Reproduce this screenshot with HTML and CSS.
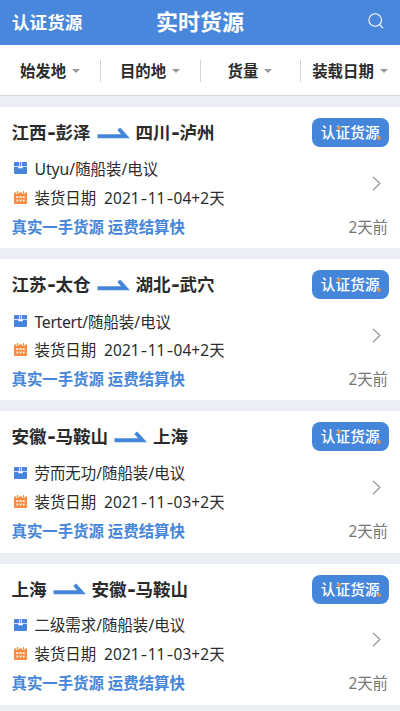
FILE: index.html
```
<!DOCTYPE html>
<html lang="zh-CN">
<head>
<meta charset="utf-8">
<title>实时货源</title>
<link rel="stylesheet" href="styles.css">
</head>
<body>
<svg class="defs" width="0" height="0" aria-hidden="true">
  <symbol id="arrow" viewBox="0 0 32 12"><path d="M0 7.2H23.5L19.8 3L22.6 .6L32.5 11.2H0Z" fill="#4586da"/></symbol>
  <symbol id="box" viewBox="0 0 13 12"><path d="M.8 0H5V4.2H0V1Q0 0 .8 0ZM8 0H12.2Q13 0 13 1V4.2H8ZM5.8 0H7.2V4.2H5.8ZM0 5H4.2V6.2H8.8V5H13V11Q13 12 12 12H1Q0 12 0 11Z" fill="#4586da"/></symbol>
  <symbol id="calendar" viewBox="0 0 13 13"><path d="M1 1.5H12Q13 1.5 13 2.5V12Q13 13 12 13H1Q0 13 0 12V2.5Q0 1.5 1 1.5Z" fill="#fa8b3c"/><path d="M3.5 0V3M9.5 0V3" stroke="#fff" stroke-width="2.4"/><path d="M3.5 0V2.7M9.5 0V2.7" stroke="#fa8b3c" stroke-width="1.2"/><path d="M2.3 5H4.3V7H2.3ZM5.5 5H7.5V7H5.5ZM8.7 5H10.7V7H8.7ZM2.3 8.6H4.3V10.6H2.3ZM5.5 8.6H7.5V10.6H5.5ZM8.7 8.6H10.7V10.6H8.7Z" fill="#fff" opacity=".85"/></symbol>
  <symbol id="chevron" viewBox="0 0 9 15"><path d="M1 .8L8 7.5L1 14.2" fill="none" stroke="#8c8c8c" stroke-width="1.1"/></symbol>
</svg>
<header class="topbar">
  <span class="topbar-link">认证货源</span>
  <h1 class="topbar-title">实时货源</h1>
  <svg class="search" viewBox="0 0 16 16"><circle cx="7.2" cy="7" r="6.3" fill="none" stroke="#fff" stroke-width="1.1"/><path d="M11.6 11.6L15 15.2" stroke="#fff" stroke-width="1.2"/></svg>
</header>
<nav class="filters">
  <div class="filter">始发地<i class="caret"></i></div>
  <div class="filter">目的地<i class="caret"></i></div>
  <div class="filter">货量<i class="caret"></i></div>
  <div class="filter">装载日期<i class="caret"></i></div>
</nav>
<main class="list">
  <article class="card">
    <div class="route"><span>江西<b class="dash">-</b>彭泽</span><svg class="arrow"><use href="#arrow"/></svg><span>四川<b class="dash">-</b>泸州</span><span class="badge">认证货源</span></div>
    <div class="details">
      <div class="rows">
        <div class="row"><svg class="box"><use href="#box"/></svg><span><span class="latin">Utyu</span><span class="slash">/</span>随船装<span class="slash">/</span>电议</span></div>
        <div class="row"><svg class="calendar"><use href="#calendar"/></svg><span>装货日期</span><span class="date">2021<b>-</b>11<b>-</b>04+2天</span></div>
      </div>
      <svg class="chevron"><use href="#chevron"/></svg>
    </div>
    <div class="foot"><span class="slogan">真实一手货源 运费结算快</span><span class="time">2天前</span></div>
  </article>
  <article class="card">
    <div class="route"><span>江苏<b class="dash">-</b>太仓</span><svg class="arrow"><use href="#arrow"/></svg><span>湖北<b class="dash">-</b>武穴</span><span class="badge">认证货源</span></div>
    <div class="details">
      <div class="rows">
        <div class="row"><svg class="box"><use href="#box"/></svg><span><span class="latin latin-tight">Tertert</span><span class="slash">/</span>随船装<span class="slash">/</span>电议</span></div>
        <div class="row"><svg class="calendar"><use href="#calendar"/></svg><span>装货日期</span><span class="date">2021<b>-</b>11<b>-</b>04+2天</span></div>
      </div>
      <svg class="chevron"><use href="#chevron"/></svg>
    </div>
    <div class="foot"><span class="slogan">真实一手货源 运费结算快</span><span class="time">2天前</span></div>
  </article>
  <article class="card">
    <div class="route"><span>安徽<b class="dash">-</b>马鞍山</span><svg class="arrow"><use href="#arrow"/></svg><span>上海</span><span class="badge">认证货源</span></div>
    <div class="details">
      <div class="rows">
        <div class="row"><svg class="box"><use href="#box"/></svg><span>劳而无功<span class="slash">/</span>随船装<span class="slash">/</span>电议</span></div>
        <div class="row"><svg class="calendar"><use href="#calendar"/></svg><span>装货日期</span><span class="date">2021<b>-</b>11<b>-</b>03+2天</span></div>
      </div>
      <svg class="chevron"><use href="#chevron"/></svg>
    </div>
    <div class="foot"><span class="slogan">真实一手货源 运费结算快</span><span class="time">2天前</span></div>
  </article>
  <article class="card">
    <div class="route"><span>上海</span><svg class="arrow"><use href="#arrow"/></svg><span>安徽<b class="dash">-</b>马鞍山</span><span class="badge">认证货源</span></div>
    <div class="details">
      <div class="rows">
        <div class="row"><svg class="box"><use href="#box"/></svg><span>二级需求<span class="slash">/</span>随船装<span class="slash">/</span>电议</span></div>
        <div class="row"><svg class="calendar"><use href="#calendar"/></svg><span>装货日期</span><span class="date">2021<b>-</b>11<b>-</b>03+2天</span></div>
      </div>
      <svg class="chevron"><use href="#chevron"/></svg>
    </div>
    <div class="foot"><span class="slogan">真实一手货源 运费结算快</span><span class="time">2天前</span></div>
  </article>
</main>
</body>
</html>
```
FILE: styles.css
```
* { box-sizing: border-box; }
body {
  margin: 0;
  height: 711px;
  overflow: hidden;
  background: #ebeef3;
  color: #2b2b2b;
  font-family: "Noto Sans", "Noto Sans CJK SC", sans-serif;
  font-size: 15.4px;
}
svg { display: block; flex: none; }
.defs { position: absolute; }
.topbar {
  display: grid;
  grid-template-columns: 1fr auto 1fr;
  align-items: center;
  height: 45px;
  padding: 0 16px 0 12px;
  background: #4887db;
  color: #fff;
}
.topbar-link { font-size: 17.6px; font-weight: 700; line-height: 24px; margin-top: -2px; }
.topbar-title { margin: -3px 0 0 4px; font-size: 22px; font-weight: 700; line-height: 30px; }
.search { width: 16px; height: 16px; justify-self: end; margin-top: -3px; }
.filters {
  display: grid;
  grid-template-columns: repeat(4, 100px);
  height: 51px;
  padding-top: 15px;
  background: #fff;
  border-bottom: 1px solid #d6d8dc;
}
.filter {
  display: flex;
  align-items: center;
  justify-content: center;
  gap: 6px;
  height: 22px;
  font-weight: 700;
  line-height: 22px;
  white-space: nowrap;
  padding-top: 1px;
}
.filter + .filter { box-shadow: inset 1px 0 #d4d4d4; }
.caret {
  margin-top: -2px;
  border: 4px solid transparent;
  border-top: 4px solid #999;
  border-bottom: 0;
}
.list { display: grid; grid-auto-rows: 141.2px; gap: 11px; padding-top: 11px; }
.card { padding: 11px 12px 0 11.5px; background: #fff; }
.route {
  display: flex;
  align-items: center;
  height: 29px;
  font-size: 17.5px;
  font-weight: 700;
  line-height: 29px;
}
.dash { display: inline-block; width: 9px; text-align: center; transform: translateY(-1px) scaleX(1.35); }
.arrow { width: 33px; height: 12px; margin: 0 6px 0 6px; }
.badge {
  position: relative;
  width: 76.5px;
  height: 29px;
  margin: 0 -.5px 0 auto;
  border-radius: 8px;
  background: #4586da;
  color: #fff;
  font-size: 14.7px;
  font-weight: 500;
  text-align: center;
}
.badge::before, .badge::after {
  content: "";
  position: absolute;
  width: 4px;
  height: 4px;
  border-radius: 50%;
  background: #d99152;
}
.badge::before { left: 25px; top: 8px; }
.badge::after { left: 65px; top: 18px; }
.details { display: flex; align-items: center; justify-content: space-between; padding: 8px 7px 0 2px; }
.row { display: flex; align-items: center; height: 28.8px; line-height: 28px; white-space: nowrap; }
.row > span { position: relative; top: .5px; }
.box { width: 13px; height: 12px; margin: -2px 8px 0 0; }
.calendar { width: 13px; height: 13px; margin: -2px 8px 0 0; }
.latin { letter-spacing: -0.1px; font-size: 15.8px; }
.latin-tight { letter-spacing: -0.35px; }
.slash { display: inline-block; width: 6px; text-align: center; }
.date { margin-left: 8px; letter-spacing: 0.1px; }
.date b { display: inline-block; width: 8px; font-weight: 400; text-align: center; transform: translateY(-.5px) scaleX(1.3); }
.chevron { width: 9px; height: 15px; margin-top: -1px; }
.foot { display: flex; justify-content: space-between; height: 29px; line-height: 29px; }
.slogan { color: #4586da; font-weight: 700; }
.time { color: #777; }
```
